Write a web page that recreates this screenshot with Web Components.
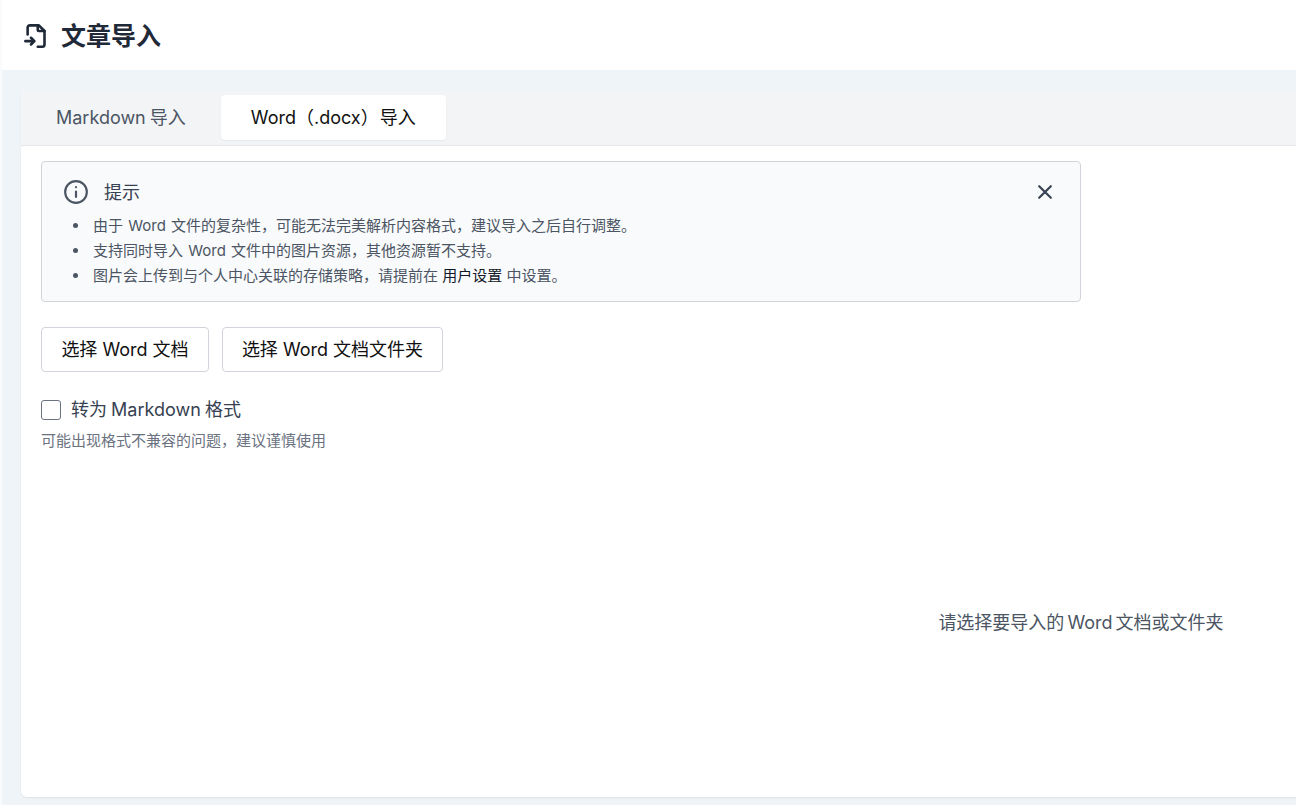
<!DOCTYPE html>
<html lang="zh">
<head>
<meta charset="utf-8">
<title>文章导入</title>
<style>
    html, body { margin: 0; height: 805px; overflow: hidden; }
    body { font-family: Inter, "Noto Sans CJK SC", sans-serif; background: #eff4f8; }
</style>
</head>
<body>
<import-page>
    <page-header slot="header" title="文章导入"></page-header>
    <import-tabs first="Markdown 导入" second="Word（.docx） 导入">
        <div style="display:grid;grid-template-columns:840px 400px;flex:1">
            <div>
                <hint-alert title="提示">
                    <li>由于 Word 文件的复杂性，可能无法完美解析内容格式，建议导入之后自行调整。</li>
                    <li>支持同时导入 Word 文件中的图片资源，其他资源暂不支持。</li>
                    <li style="word-spacing:0">图片会上传到与个人中心关联的存储策略，请提前在 <b style="font-weight:400;color:#111827">用户设置</b> 中设置。</li>
                </hint-alert>
                <div style="display:flex;gap:13px;margin-top:25px">
                    <outline-button>选择 Word 文档</outline-button>
                    <outline-button style="width:221px">选择 Word 文档文件夹</outline-button>
                </div>
                <check-field label="转为 Markdown 格式" help="可能出现格式不兼容的问题，建议谨慎使用"></check-field>
            </div>
            <empty-note>请选择要导入的 Word 文档或文件夹</empty-note>
        </div>
    </import-tabs>
</import-page>

<script>
const ImportPageTemplate = document.createElement('template');
ImportPageTemplate.innerHTML = `
    <style>
        :host { display: flex; flex-direction: column; height: 805px; border-left: 2px solid #f9fafb; box-sizing: border-box; }
        .body { flex: 1; min-height: 0; padding: 20px 0 8px 19px; }
    </style>
    <slot name="header"></slot>
    <div class="body"><slot></slot></div>
`;

class ImportPage extends HTMLElement {
    constructor() {
        super();
        this.attachShadow({mode: 'open'}).appendChild(ImportPageTemplate.content.cloneNode(true));
    }
}

const PageHeaderTemplate = document.createElement('template');
PageHeaderTemplate.innerHTML = `
    <style>
        :host { display: flex; align-items: center; height: 70px; padding-left: 20px; background: #fff; color: #1f2937; flex: none; }
        svg { width: 27px; height: 27px; margin-right: 12px; flex: none; }
        h1 { margin: 0; font-size: 25px; line-height: 32px; font-weight: 700; position: relative; top: 1px; }
    </style>
    <svg viewBox="0 0 24 24" fill="none" stroke="currentColor" stroke-width="2.3" stroke-linecap="round" stroke-linejoin="round">
        <path d="M5 11V5a2 2 0 0 1 2-2h8l5 5v12a2 2 0 0 1-2 2h-4"/>
        <path d="M14 3v4a1 1 0 0 0 1 1h5"/>
        <path d="M3 17h8M8 14l3 3-3 3"/>
    </svg>
    <h1></h1>
`;

class PageHeader extends HTMLElement {
    constructor() {
        super();
        const root = this.attachShadow({mode: 'open'});
        root.appendChild(PageHeaderTemplate.content.cloneNode(true));
        root.querySelector('h1').textContent = this.getAttribute('title');
    }
}

const ImportTabsTemplate = document.createElement('template');
ImportTabsTemplate.innerHTML = `
    <style>
        :host { display: flex; flex-direction: column; height: 100%; background: #fff; border-radius: 6px 0 0 6px; box-shadow: 0 1px 2px rgba(0,0,0,.08); box-sizing: border-box; overflow: hidden; }
        .bar { display: flex; gap: 5px; height: 56px; box-sizing: border-box; padding: 5px; background: #f3f4f6; border-bottom: 1px solid #e5e7eb; flex: none; }
        .tab { display: flex; align-items: center; justify-content: center; height: 45px; box-sizing: border-box; padding: 0 30px 4px; font-size: 18px; color: #4b5563; border-radius: 4px; word-spacing: -4px; }
        .tab:first-child { word-spacing: -1px; }
        .tab.active { background: #fff; color: #111; box-shadow: 0 1px 2px rgba(0,0,0,.05); }
        .panel { display: flex; flex: 1; min-height: 0; padding: 15px 20px; }
    </style>
    <div class="bar">
        <div class="tab"></div>
        <div class="tab active"></div>
    </div>
    <div class="panel"><slot></slot></div>
`;

class ImportTabs extends HTMLElement {
    constructor() {
        super();
        const root = this.attachShadow({mode: 'open'});
        root.appendChild(ImportTabsTemplate.content.cloneNode(true));
        const tabs = root.querySelectorAll('.tab');
        tabs[0].textContent = this.getAttribute('first');
        tabs[1].textContent = this.getAttribute('second');
    }
}

const HintAlertTemplate = document.createElement('template');
HintAlertTemplate.innerHTML = `
    <style>
        :host { display: block; box-sizing: border-box; width: 1040px; height: 141px; padding: 15px 25px 0 21px; background: #f9fafb; border: 1px solid #d1d5db; border-radius: 4px; color: #4b5563; }
        .head { display: flex; align-items: center; height: 30px; color: #374151; font-size: 18px; }
        .head svg { width: 26px; height: 26px; margin-right: 15px; flex: none; color: #4b5563; }
        .head span { flex: 1; position: relative; top: -1px; }
        .head svg.close { width: 20px; height: 20px; margin: 0; color: #374151; }
        ul { margin: 6px 0 0; padding: 0 0 0 30px; font-size: 15px; line-height: 25px; list-style: none; word-spacing: 1px; }
        ::slotted(li)::before { content: ""; display: inline-block; width: 5px; height: 5px; margin: 0 15px 2px -20px; border-radius: 50%; background: #4b5563; vertical-align: middle; }
    </style>
    <div class="head">
        <svg viewBox="0 0 24 24" fill="none" stroke="currentColor" stroke-width="2" stroke-linecap="round" stroke-linejoin="round">
            <circle cx="12" cy="12" r="10"/>
            <path d="M12 16.5v-5M12 7.5v.01"/>
        </svg>
        <span></span>
        <svg class="close" viewBox="0 0 24 24" fill="none" stroke="currentColor" stroke-width="2.6" stroke-linecap="round">
            <path d="M5 5l14 14M19 5L5 19"/>
        </svg>
    </div>
    <ul><slot></slot></ul>
`;

class HintAlert extends HTMLElement {
    constructor() {
        super();
        const root = this.attachShadow({mode: 'open'});
        root.appendChild(HintAlertTemplate.content.cloneNode(true));
        root.querySelector('.head span').textContent = this.getAttribute('title');
    }
}

const OutlineButtonTemplate = document.createElement('template');
OutlineButtonTemplate.innerHTML = `
    <style>
        :host { display: flex; align-items: center; height: 45px; width: 168px; justify-content: center; box-sizing: border-box; padding: 0 0 4px; background: #fff; border: 1px solid #d1d5db; border-radius: 4px; font-size: 18px; color: #111; }
    </style>
    <slot></slot>
`;

class OutlineButton extends HTMLElement {
    constructor() {
        super();
        this.attachShadow({mode: 'open'}).appendChild(OutlineButtonTemplate.content.cloneNode(true));
    }
}

const CheckFieldTemplate = document.createElement('template');
CheckFieldTemplate.innerHTML = `
    <style>
        :host { display: block; margin-top: 25px; }
        .row { display: flex; align-items: center; gap: 10px; height: 26px; font-size: 18px; color: #374151; word-spacing: -1px; }
        .label { position: relative; top: -2px; }
        .box { width: 20px; height: 20px; box-sizing: border-box; background: #fff; border: 1px solid #6b7280; border-radius: 3px; flex: none; }
        .help { margin-top: 8px; font-size: 15px; line-height: 20px; color: #6b7280; }
    </style>
    <div class="row"><span class="box"></span><span class="label"></span></div>
    <div class="help"></div>
`;

class CheckField extends HTMLElement {
    constructor() {
        super();
        const root = this.attachShadow({mode: 'open'});
        root.appendChild(CheckFieldTemplate.content.cloneNode(true));
        root.querySelector('.label').textContent = this.getAttribute('label');
        root.querySelector('.help').textContent = this.getAttribute('help');
    }
}

const EmptyNoteTemplate = document.createElement('template');
EmptyNoteTemplate.innerHTML = `
    <style>
        :host { display: flex; align-items: center; justify-content: center; height: 100%; font-size: 18px; color: #4b5563; padding-top: 298px; box-sizing: border-box; white-space: nowrap; word-spacing: -2px; }
    </style>
    <slot></slot>
`;

class EmptyNote extends HTMLElement {
    constructor() {
        super();
        this.attachShadow({mode: 'open'}).appendChild(EmptyNoteTemplate.content.cloneNode(true));
    }
}

customElements.define('import-page', ImportPage);
customElements.define('page-header', PageHeader);
customElements.define('import-tabs', ImportTabs);
customElements.define('hint-alert', HintAlert);
customElements.define('outline-button', OutlineButton);
customElements.define('check-field', CheckField);
customElements.define('empty-note', EmptyNote);
</script>
</body>
</html>
